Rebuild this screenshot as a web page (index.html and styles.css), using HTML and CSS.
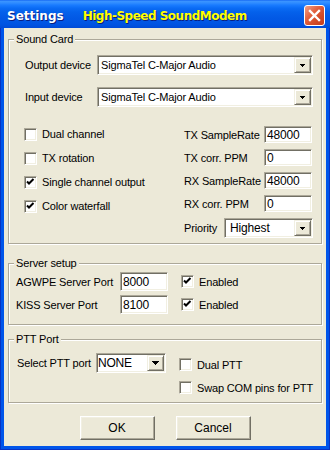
FILE: index.html
```html
<!DOCTYPE html>
<html lang="en">
<head>
  <meta charset="UTF-8">
  <title>Settings</title>
  <link rel="stylesheet" href="styles.css">
</head>
<body>
  <div class="window">
    <div class="titlebar">
      <span class="title">Settings</span>
      <span class="title title-app">High-Speed SoundModem</span>
      <div class="close-btn">
        <svg width="19" height="19" viewBox="0 0 19 19"><path d="M5 5 L14 14 M14 5 L5 14" stroke="#fff" stroke-width="2.4" stroke-linecap="square"/></svg>
      </div>
    </div>

    <div class="client">
      <fieldset class="group sound-card">
        <legend>Sound Card</legend>
        <div class="device-row">
          <span class="device-label">Output device</span>
          <div class="combo device-combo">
            <span class="combo-text">SigmaTel C-Major Audio</span>
            <span class="combo-btn"><svg width="5" height="3"><rect x="0" y="0" width="5" height="1"/><rect x="1" y="1" width="3" height="1"/><rect x="2" y="2" width="1" height="1"/></svg></span>
          </div>
        </div>
        <div class="device-row">
          <span class="device-label">Input device</span>
          <div class="combo device-combo">
            <span class="combo-text">SigmaTel C-Major Audio</span>
            <span class="combo-btn"><svg width="5" height="3"><rect x="0" y="0" width="5" height="1"/><rect x="1" y="1" width="3" height="1"/><rect x="2" y="2" width="1" height="1"/></svg></span>
          </div>
        </div>

        <div class="options">
          <div class="checks">
            <div class="check"><span class="box"></span>Dual channel</div>
            <div class="check"><span class="box"></span>TX rotation</div>
            <div class="check"><span class="box checked"><svg width="11" height="11"><path d="M2 4.5 L4 6.5 L8.5 2" fill="none" stroke="#000" stroke-width="2"/></svg></span>Single channel output</div>
            <div class="check"><span class="box checked"><svg width="11" height="11"><path d="M2 4.5 L4 6.5 L8.5 2" fill="none" stroke="#000" stroke-width="2"/></svg></span>Color waterfall</div>
          </div>
          <div class="rates">
            <div class="rate-row"><span class="rate-label">TX SampleRate</span><span class="edit">48000</span></div>
            <div class="rate-row"><span class="rate-label">TX corr. PPM</span><span class="edit">0</span></div>
            <div class="rate-row"><span class="rate-label">RX SampleRate</span><span class="edit">48000</span></div>
            <div class="rate-row"><span class="rate-label">RX corr. PPM</span><span class="edit">0</span></div>
            <div class="priority-row">
              <span class="priority-label">Priority</span>
              <div class="combo priority-combo">
                <span class="combo-text">Highest</span>
                <span class="combo-btn"><svg width="5" height="3"><rect x="0" y="0" width="5" height="1"/><rect x="1" y="1" width="3" height="1"/><rect x="2" y="2" width="1" height="1"/></svg></span>
              </div>
            </div>
          </div>
        </div>
      </fieldset>

      <fieldset class="group server-setup">
        <legend>Server setup</legend>
        <div class="server-row">
          <span class="server-label">AGWPE Server Port</span>
          <span class="edit port">8000</span>
          <div class="check"><span class="box checked"><svg width="11" height="11"><path d="M2 4.5 L4 6.5 L8.5 2" fill="none" stroke="#000" stroke-width="2"/></svg></span>Enabled</div>
        </div>
        <div class="server-row">
          <span class="server-label">KISS Server Port</span>
          <span class="edit port">8100</span>
          <div class="check"><span class="box checked"><svg width="11" height="11"><path d="M2 4.5 L4 6.5 L8.5 2" fill="none" stroke="#000" stroke-width="2"/></svg></span>Enabled</div>
        </div>
      </fieldset>

      <fieldset class="group ptt-port">
        <legend>PTT Port</legend>
        <div class="ptt-row">
          <span class="ptt-label">Select PTT port</span>
          <div class="combo ptt-combo">
            <span class="combo-text">NONE</span>
            <span class="combo-btn"><svg width="7" height="4"><rect x="0" y="0" width="7" height="1"/><rect x="1" y="1" width="5" height="1"/><rect x="2" y="2" width="3" height="1"/><rect x="3" y="3" width="1" height="1"/></svg></span>
          </div>
          <div class="ptt-checks">
            <div class="check"><span class="box"></span>Dual PTT</div>
            <div class="check"><span class="box"></span>Swap COM pins for PTT</div>
          </div>
        </div>
      </fieldset>

      <div class="buttons">
        <button class="btn">OK</button>
        <button class="btn">Cancel</button>
      </div>
    </div>
  </div>
</body>
</html>
```

FILE: styles.css
```css
* {
  box-sizing: border-box;
}

body {
  margin: 0;
  font-family: "Liberation Sans", Arial, sans-serif;
  font-size: 11px;
  letter-spacing: -0.15px;
  color: #000;
}

.window {
  width: 330px;
  height: 450px;
  display: flex;
  flex-direction: column;
  background: #0055ea;
  box-shadow: inset 1px 0 #0833c4, inset -1px 0 #0833c4, inset 0 -1px #0833c4;
}

.titlebar {
  flex: none;
  height: 28px;
  display: flex;
  align-items: center;
  padding: 2px 5px 0 7px;
  background: linear-gradient(to bottom, #0a5bef 0, #3d95ff 1px, #2f8cff 3px, #1a7cff 5px, #0b6cf5 8px, #0461eb 12px, #0259e5 18px, #0054e3 24px, #0050dd 26px, #0049d6 28px);
}

.title {
  font-family: "DejaVu Sans", sans-serif;
  font-weight: bold;
  font-size: 12px;
  letter-spacing: 0;
  color: #fff;
  text-shadow: 1px 1px #0a1e80;
  padding-top: 2px;
}

.title-app {
  margin-left: 19px;
  color: #ffff00;
  letter-spacing: -0.5px;
}

.close-btn {
  margin-left: auto;
  width: 21px;
  height: 21px;
  border: 1px solid #fff;
  border-radius: 3px;
  background: linear-gradient(135deg, #f0a088 0, #e2603e 40%, #d24a26 70%, #c43c1c 100%);
}

.close-btn svg {
  display: block;
}

.client {
  flex: 1;
  margin: 0 4px 4px;
  padding: 5px 4px 0;
  background: #ece9d8;
  display: flex;
  flex-direction: column;
}

.group {
  margin: 0;
  padding: 0 8px 0 5px;
  min-width: 0;
  border: 1px solid #aca899;
  box-shadow: inset 1px 1px #fff, 1px 1px #fff;
}

.group legend {
  padding: 0 2px;
  line-height: 13px;
  background: #ece9d8;
}

/* sound card */
.sound-card {
  padding-top: 9px;
  padding-bottom: 5px;
}

.device-row {
  display: flex;
  align-items: center;
  padding-left: 11px;
}

.device-row + .device-row {
  margin-top: 12px;
}

.device-label {
  width: 72px;
}

.combo {
  display: flex;
  height: 20px;
  padding: 1px;
  background: #fff;
  border: 1px solid;
  border-color: #aca899 #fff #fff #aca899;
  box-shadow: inset 1px 1px #716f64, inset -1px -1px #f1efe2;
}

.combo-text {
  flex: 1;
  padding-left: 2px;
  display: flex;
  align-items: center;
  white-space: nowrap;
}

.combo-btn {
  width: 17px;
  display: flex;
  align-items: center;
  justify-content: center;
  background: #ece9d8;
  border: 1px solid;
  border-color: #f1efe2 #716f64 #716f64 #f1efe2;
  box-shadow: inset 1px 1px #fff, inset -1px -1px #aca899;
}

.combo-btn svg {
  display: block;
}

.device-combo {
  width: 216px;
}

.options {
  display: flex;
  margin-top: 15px;
  padding-left: 10px;
}

.checks {
  width: 160px;
  display: flex;
  flex-direction: column;
}

.checks .check {
  height: 24px;
}

.check {
  display: flex;
  align-items: center;
  gap: 5px;
  white-space: nowrap;
}

.box {
  flex: none;
  width: 13px;
  height: 13px;
  background: #fff;
  border: 1px solid;
  border-color: #aca899 #fff #fff #aca899;
  box-shadow: inset 1px 1px #716f64, inset -1px -1px #f1efe2;
}

.box svg {
  display: block;
}

.rates {
  padding-top: 4px;
  display: flex;
  flex-direction: column;
  gap: 6px;
}

.rate-row {
  display: flex;
  align-items: center;
  height: 17px;
  white-space: nowrap;
}

.rate-label {
  width: 80px;
}

.edit {
  width: 48px;
  height: 17px;
  padding-left: 2px;
  display: flex;
  align-items: center;
  background: #fff;
  border: 1px solid;
  border-color: #aca899 #fff #fff #aca899;
  box-shadow: inset 1px 1px #716f64, inset -1px -1px #f1efe2;
  font-size: 12px;
}

.priority-row {
  display: flex;
  align-items: center;
}

.priority-label {
  width: 40px;
}

.priority-combo {
  width: 89px;
}

.priority-combo .combo-text {
  padding-left: 4px;
  font-size: 12px;
}

/* server setup */
.server-setup {
  margin-top: 13px;
  padding-top: 2px;
  padding-bottom: 10px;
}

.server-row {
  display: flex;
  align-items: center;
  padding-left: 2px;
}

.server-row + .server-row {
  margin-top: 4px;
}

.server-label {
  width: 104px;
  white-space: nowrap;
}

.edit.port {
  height: 19px;
}

.server-row .check {
  margin-left: 13px;
}

/* ptt port */
.ptt-port {
  margin-top: 8px;
  padding-top: 7px;
  padding-bottom: 8px;
}

.ptt-row {
  display: flex;
  align-items: flex-start;
  padding-left: 3px;
}

.ptt-label {
  width: 80px;
  height: 20px;
  display: flex;
  align-items: center;
  white-space: nowrap;
}

.ptt-combo {
  width: 71px;
}

.ptt-combo .combo-text {
  padding-left: 0;
  font-size: 12px;
}

.ptt-checks {
  margin-left: 13px;
  padding-top: 5px;
  display: flex;
  flex-direction: column;
  gap: 10px;
}

.ptt-checks .check {
  height: 13px;
}

/* buttons */
.buttons {
  margin-top: 13px;
  display: flex;
  justify-content: center;
  gap: 21px;
}

.btn {
  width: 75px;
  height: 24px;
  padding: 0;
  font-family: "Liberation Sans", Arial, sans-serif;
  font-size: 12px;
  color: #000;
  background: #ece9d8;
  border: 1px solid;
  border-color: #fff #716f64 #716f64 #fff;
  box-shadow: inset -1px -1px #aca899, inset 1px 1px #f1efe2;
}
```
